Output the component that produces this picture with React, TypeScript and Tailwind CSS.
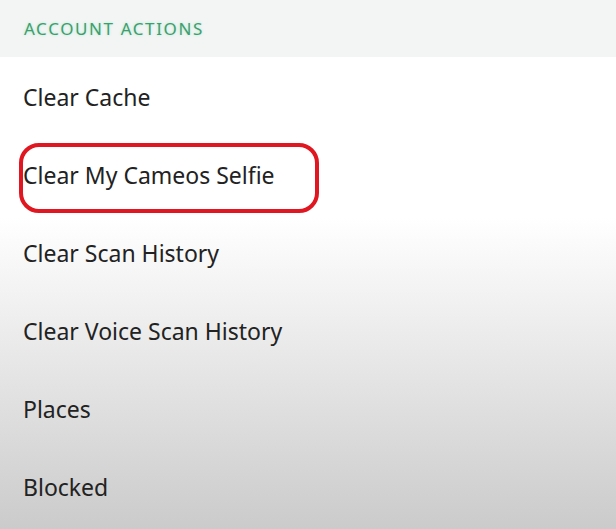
import React from "react";

const rows = [
  "Clear Cache",
  "Clear My Cameos Selfie",
  "Clear Scan History",
  "Clear Voice Scan History",
  "Places",
  "Blocked",
];

export default function App() {
  return (
    <div className="w-[616px] h-[529px] overflow-hidden font-['Noto_Sans',sans-serif] [font-variant-ligatures:none] bg-white">
      <div className="h-[57px] bg-[#f3f5f5] flex items-center pl-[24px]">
        <span className="text-[17px] tracking-[1.6px] text-[#3f9e6e] [text-shadow:0_0_3px_rgba(90,220,150,0.45)]">
          ACCOUNT ACTIONS
        </span>
      </div>
      <div className="h-[472px] pt-[1px] bg-[linear-gradient(to_bottom,#ffffff_0%,#ffffff_34%,#cbcbcb_100%)]">
        {rows.map((r, i) => (
          <div key={r} className="relative h-[78px] flex items-center pl-[23px]">
            <span className="text-[23px] text-[#222222]">{r}</span>
            {i === 1 && (
              <div className="absolute left-[19px] top-[7px] w-[300px] h-[70px] border-[4px] border-[#e01620] rounded-[20px]" />
            )}
          </div>
        ))}
      </div>
    </div>
  );
}
